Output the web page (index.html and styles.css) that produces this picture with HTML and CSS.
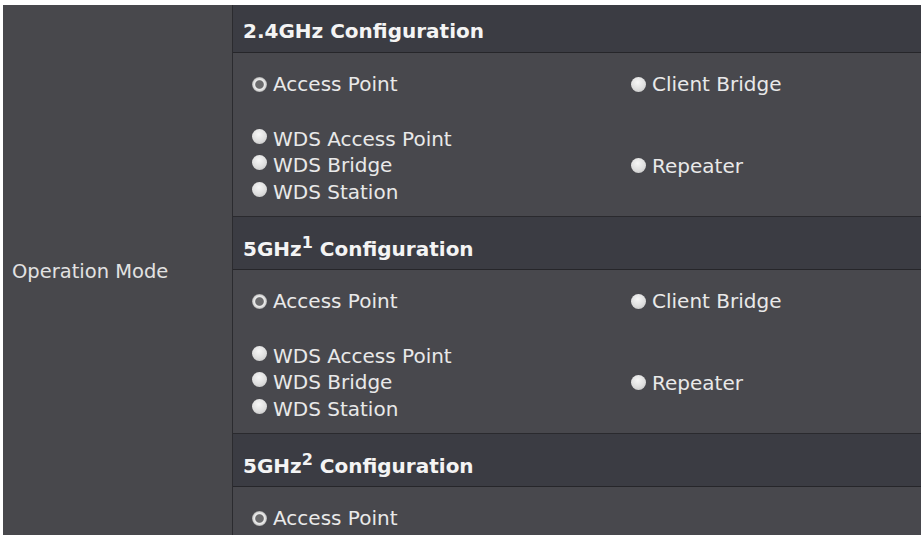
FILE: index.html
```html
<!DOCTYPE html>
<html>
<head>
<title>Operation Mode</title>
<link rel="stylesheet" href="styles.css">
</head>
<body>

<div class="config">
  <div class="config-label">Operation Mode</div>

  <div class="bands">
    <div class="band-head first">2.4GHz Configuration</div>
    <div class="modes">
      <div class="mode-cell"><span class="radio checked"></span>Access Point</div>
      <div class="mode-cell right"><span class="radio"></span>Client Bridge</div>
      <div class="mode-cell tall">
        <div class="stack">
          <div><span class="radio"></span>WDS Access Point</div>
          <div><span class="radio"></span>WDS Bridge</div>
          <div><span class="radio"></span>WDS Station</div>
        </div>
      </div>
      <div class="mode-cell right tall"><span class="radio"></span>Repeater</div>
    </div>

    <div class="band-head">5GHz<sup>1</sup> Configuration</div>
    <div class="modes">
      <div class="mode-cell"><span class="radio checked"></span>Access Point</div>
      <div class="mode-cell right"><span class="radio"></span>Client Bridge</div>
      <div class="mode-cell tall">
        <div class="stack">
          <div><span class="radio"></span>WDS Access Point</div>
          <div><span class="radio"></span>WDS Bridge</div>
          <div><span class="radio"></span>WDS Station</div>
        </div>
      </div>
      <div class="mode-cell right tall"><span class="radio"></span>Repeater</div>
    </div>

    <div class="band-head">5GHz<sup>2</sup> Configuration</div>
    <div class="modes">
      <div class="mode-cell"><span class="radio checked"></span>Access Point</div>
      <div class="mode-cell right"></div>
    </div>
  </div>
</div>

</body>
</html>
```

FILE: styles.css
```css
html {
  overflow: hidden;
}
body {
  margin: 0;
  padding: 5px 0 0 3px;
  background-color: #ffffff;
  font-family: "DejaVu Sans", Verdana, sans-serif;
  font-size: 20px;
  color: #e9e9e9;
}

.config {
  display: flex;
  background-color: #48484c;
}

.config-label {
  width: 230px;
  flex-shrink: 0;
  border-right: 1px solid #2b2b2f;
  display: flex;
  align-items: center;
  padding: 0 0 10px 9px;
  box-sizing: border-box;
  font-size: 19.5px;
  line-height: 24px;
  color: #e2e2e2;
}

.bands {
  flex: 1;
}

.band-head {
  background-color: #3b3c43;
  border-top: 1px solid #2a2a2e;
  border-bottom: 1px solid #26262a;
  padding: 20px 10px 8px;
  line-height: 24px;
  font-weight: bold;
  color: #f4f4f4;
}
.band-head.first {
  border-top: none;
  padding-top: 14px;
  padding-bottom: 9px;
}
.band-head sup {
  font-size: 16px;
  line-height: 0;
  vertical-align: 8px;
}

.modes {
  display: grid;
  grid-template-columns: 379px 1fr;
  background-color: #48484d;
}

.mode-cell {
  display: flex;
  align-items: center;
  height: 62px;
  padding-left: 19px;
  line-height: 24px;
}
.mode-cell.tall {
  height: 101px;
}

.stack {
  line-height: 26.5px;
}

.radio {
  display: inline-block;
  width: 15px;
  height: 15px;
  border-radius: 50%;
  margin-right: 6px;
  vertical-align: 2px;
  background: radial-gradient(circle at 45% 35%, #f6f6f6 0%, #dedede 55%, #bcbcbc 100%);
  flex-shrink: 0;
}
.radio.checked {
  background: radial-gradient(circle, #6b6b6d 0, #6b6b6d 3.8px, #eeeeee 4.8px, #d6d6d6 6.4px, #a4a4a4 7.5px);
}
```
